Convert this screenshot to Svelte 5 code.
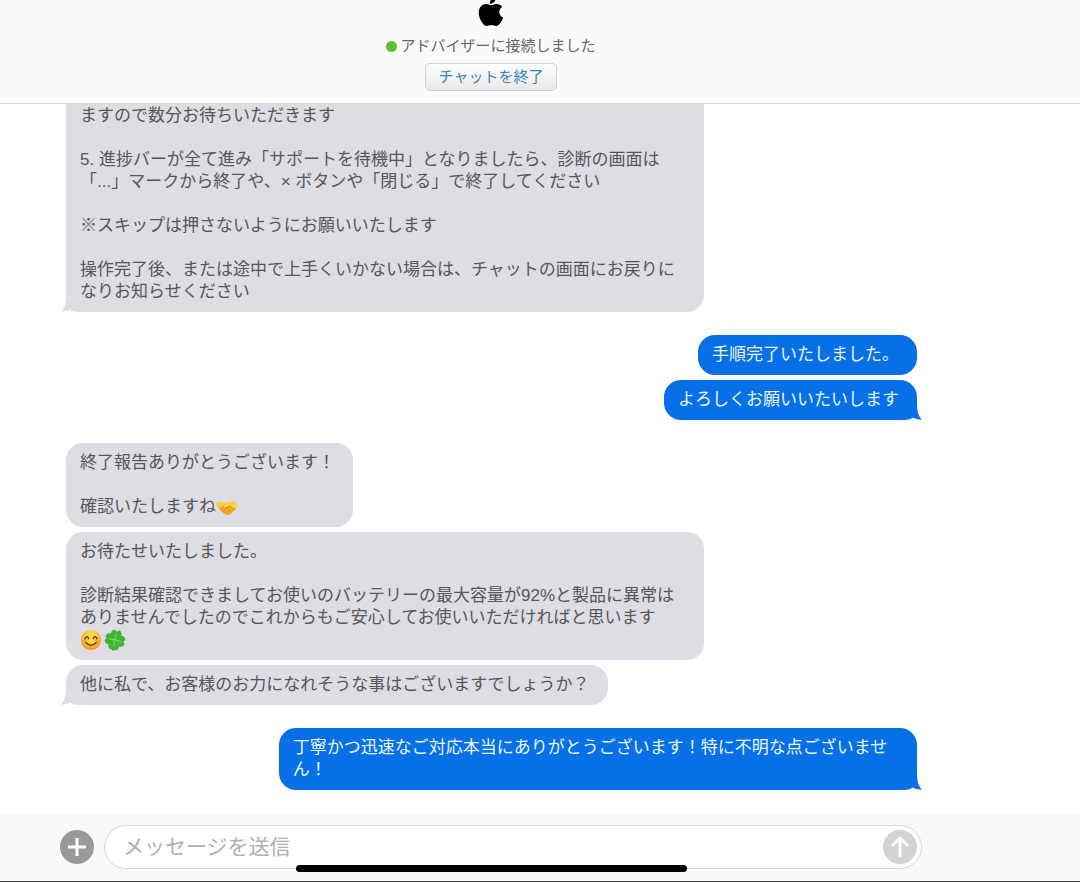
<script lang="ts">
	type Emoji = 'handshake' | 'smile' | 'clover';

	interface Message {
		text: string;
		emoji?: Emoji[];
		continued?: boolean;
	}

	interface Group {
		from: 'advisor' | 'me';
		messages: Message[];
	}

	const EMOJI_LABELS: Record<Emoji, string> = {
		handshake: '握手',
		smile: '笑顔',
		clover: '四つ葉のクローバー',
	};

	const groups: Group[] = [
		{
			from: 'advisor',
			messages: [
				{
					text: 'ますので数分お待ちいただきます\n\n5. 進捗バーが全て進み「サポートを待機中」となりましたら、診断の画面は「...」マークから終了や、× ボタンや「閉じる」で終了してください\n\n※スキップは押さないようにお願いいたします\n\n操作完了後、または途中で上手くいかない場合は、チャットの画面にお戻りになりお知らせください',
					continued: true,
				},
			],
		},
		{
			from: 'me',
			messages: [{ text: '手順完了いたしました。' }, { text: 'よろしくお願いいたいします' }],
		},
		{
			from: 'advisor',
			messages: [
				{ text: '終了報告ありがとうございます！\n\n確認いたしますね', emoji: ['handshake'] },
				{
					text: 'お待たせいたしました。\n\n診断結果確認できましてお使いのバッテリーの最大容量が92%と製品に異常はありませんでしたのでこれからもご安心してお使いいただければと思います\n',
					emoji: ['smile', 'clover'],
				},
				{ text: '他に私で、お客様のお力になれそうな事はございますでしょうか？' },
			],
		},
		{
			from: 'me',
			messages: [
				{ text: '丁寧かつ迅速なご対応本当にありがとうございます！特に不明な点ございません！' },
			],
		},
	];

	let draft = $state('');
</script>

{#snippet emojiIcon(name: Emoji)}
	<svg class="emoji" viewBox="0 0 24 24" role="img" aria-label={EMOJI_LABELS[name]}>
		{#if name === 'handshake'}
			<path d="M0 8 4 6 9 8 14 6.500 20 6 24 9.500 21 15 15 20.500 11 21 4 15Z" fill="#f0ac24" />
			<path d="M4 6 9 8 14 6.500 20 6 24 9.500 21 14 15 11 10 13 8 11 11 8.500 4 12 0 8Z" fill="#ffd149" />
			<path d="M10 13l5-2 5 4M5 15l4 3M8 14l4 4M12 14l4 3" fill="none" stroke="#d98a17" stroke-width="1" stroke-linecap="round" />
		{:else if name === 'smile'}
			<defs>
				<radialGradient id="face" cx="50%" cy="38%" r="62%">
					<stop offset="0.4" stop-color="#ffd84a" />
					<stop offset="1" stop-color="#f0901c" />
				</radialGradient>
			</defs>
			<circle cx="12" cy="12" r="11" fill="url(#face)" />
			<circle cx="5.500" cy="13.500" r="2.500" fill="#f98a3c" opacity="0.6" />
			<circle cx="18.500" cy="13.500" r="2.500" fill="#f98a3c" opacity="0.6" />
			<path d="M5.500 10.500q2-4 4 0M14.500 10.500q2-4 4 0M6.500 15q5.500 5.500 11 0" fill="none" stroke="#6b3a12" stroke-width="1.600" stroke-linecap="round" />
		{:else}
			<g transform="rotate(12 12 12)">
				<path d="M12 12q2 6 0 11" fill="none" stroke="#3d9a2c" stroke-width="2" stroke-linecap="round" />
				<g fill="#43b535">
					<path id="leaf" d="M12 12C6 9 5 5 7 2.500 8.500.5 11 .5 12 3 13 .5 15.500.5 17 2.500 19 5 18 9 12 12Z" />
					<use href="#leaf" transform="rotate(90 12 12)" />
					<use href="#leaf" transform="rotate(180 12 12)" />
					<use href="#leaf" transform="rotate(270 12 12)" />
				</g>
				<path d="M12 5v14M5 12h14" stroke="#84dc62" stroke-width="1" />
			</g>
		{/if}
	</svg>
{/snippet}

<div class="app">
	<header class="header">
		<svg class="logo" viewBox="0 0 26 30" role="img" aria-label="Apple">
			<path d="M17.800 0c.2 1.800-.5 3.500-1.500 4.700-1.100 1.300-2.800 2.200-4.500 2.100-.2-1.700.6-3.500 1.600-4.600C14.500 1 16.400.1 17.800 0Z" />
			<path d="M24.300 10c-2 1.200-3 2.900-3 5 0 2.600 1.500 4.600 3.900 5.600-.7 2.100-1.700 3.900-3 5.500-1.100 1.600-2.300 3-4.100 3-1.700 0-2.400-1-4.700-1-2.300 0-3.100 1-4.700 1-1.800 0-3.100-1.500-4.200-3.100C2.300 23.200.8 19.500.8 15.900c0-5.600 3.600-8.800 7.300-8.800 2 0 3.600 1.200 4.800 1.200 1.200 0 3.100-1.300 5.400-1.300 2.400 0 4.600 1.100 6 3Z" />
		</svg>
		<p class="status"><span class="dot"></span>アドバイザーに接続しました</p>
		<button class="end-chat" type="button">チャットを終了</button>
	</header>

	<main class="chat">
		{#each groups as group}
			<section class="group {group.from}">
				{#each group.messages as message, i}
					<div class="bubble" class:continued={message.continued}>
						{message.text}{#each message.emoji ?? [] as name}{@render emojiIcon(name)}{/each}{#if i === group.messages.length - 1}<svg
								class="tail"
								viewBox="0 0 20 18"
								aria-hidden="true"
							>
								<path d="M5 0C5 9 4 14 0 17.500 4 17.500 7 17 9 15.500 12 17.500 15 18 20 18V0Z" />
							</svg>{/if}
					</div>
				{/each}
			</section>
		{/each}
	</main>

	<form class="composer" onsubmit={(e) => e.preventDefault()}>
		<button class="round add" type="button" aria-label="添付ファイルを追加">
			<svg viewBox="0 0 34 34" aria-hidden="true"><path d="M17 8v18M8 17h18" /></svg>
		</button>
		<div class="field">
			<input type="text" placeholder="メッセージを送信" aria-label="メッセージを送信" bind:value={draft} />
			<button class="round send" type="submit" aria-label="送信">
				<svg viewBox="0 0 34 34" aria-hidden="true"><path d="M17 27V8M9 16l8-8 8 8" /></svg>
			</button>
		</div>
		<div class="home-indicator"></div>
	</form>
</div>

<style>
	:global(body) {
		background: #fff;
	}

	.app {
		display: flex;
		flex-direction: column;
		height: 100vh;
		font-family: 'Liberation Sans', 'Noto Sans CJK JP', sans-serif;
		color: #55555a;
	}

	.header {
		display: flex;
		flex: none;
		flex-direction: column;
		align-items: center;
		padding: 0 98px 12px 0;
		background: #fafafa;
		border-bottom: 1px solid #dcdcde;
		overflow: hidden;
	}

	.logo {
		width: 26px;
		height: 30px;
		margin-top: -3px;
		fill: #000;
	}

	.status {
		display: flex;
		align-items: center;
		gap: 3px;
		margin: 8px 0 6px;
		font-size: 15px;
		line-height: 22px;
		color: #666;
	}

	.dot {
		width: 11px;
		height: 11px;
		border-radius: 50%;
		background: #5fbf35;
	}

	.end-chat {
		padding: 0 13px;
		border: 1px solid #d2d2d4;
		border-radius: 5px;
		background: linear-gradient(#fff, #e9e9ea);
		font: inherit;
		font-size: 15px;
		line-height: 26px;
		color: #3683bd;
	}

	.chat {
		display: flex;
		flex: 1;
		flex-direction: column;
		justify-content: flex-end;
		gap: 23px;
		min-height: 0;
		padding: 0 163px 23px 66px;
		overflow: hidden;
	}

	.group {
		display: flex;
		flex: none;
		flex-direction: column;
		align-items: flex-start;
		gap: 5px;
	}

	.group.me {
		align-items: flex-end;
	}

	.bubble {
		position: relative;
		box-sizing: border-box;
		max-width: 75%;
		padding: 9px 18px 9px 14px;
		border-radius: 17px;
		background: #dedde3;
		font-size: 17px;
		line-height: 22px;
		white-space: pre-wrap;
	}

	.me .bubble {
		background: #0770e6;
		color: #e9f6ff;
	}

	.continued {
		border-top-left-radius: 0;
		border-top-right-radius: 0;
	}

	.tail {
		position: absolute;
		bottom: 0;
		left: -5px;
		width: 20px;
		height: 18px;
		fill: #dedde3;
	}

	.me .tail {
		right: -5px;
		left: auto;
		fill: #0770e6;
		transform: scaleX(-1);
	}

	.emoji {
		width: 22px;
		height: 22px;
		margin-right: 2px;
		vertical-align: top;
	}

	.composer {
		position: relative;
		display: flex;
		flex: none;
		align-items: center;
		gap: 10px;
		padding: 12px 158px 12px 60px;
		background: #f9f9f9;
		border-bottom: 1px solid #48484a;
	}

	.field {
		display: flex;
		flex: 1;
		align-items: center;
		padding: 4px 4px 4px 18px;
		border: 1px solid #d6d6d8;
		border-radius: 22px;
		background: #fff;
	}

	.field input {
		flex: 1;
		min-width: 0;
		padding: 0;
		border: 0;
		outline: 0;
		background: none;
		font: inherit;
		font-size: 21px;
		line-height: 30px;
		color: #333;
	}

	.field input::placeholder {
		color: #b0b0b2;
	}

	.round {
		flex: none;
		width: 34px;
		height: 34px;
		padding: 0;
		border: 0;
		border-radius: 50%;
	}

	.round svg {
		display: block;
		fill: none;
		stroke: #fff;
		stroke-width: 3;
	}

	.add {
		background: #999;
	}

	.send {
		background: #d3d3d4;
	}

	.home-indicator {
		position: absolute;
		bottom: 9px;
		left: 296px;
		right: 393px;
		height: 7px;
		border-radius: 4px;
		background: #000;
	}
</style>
